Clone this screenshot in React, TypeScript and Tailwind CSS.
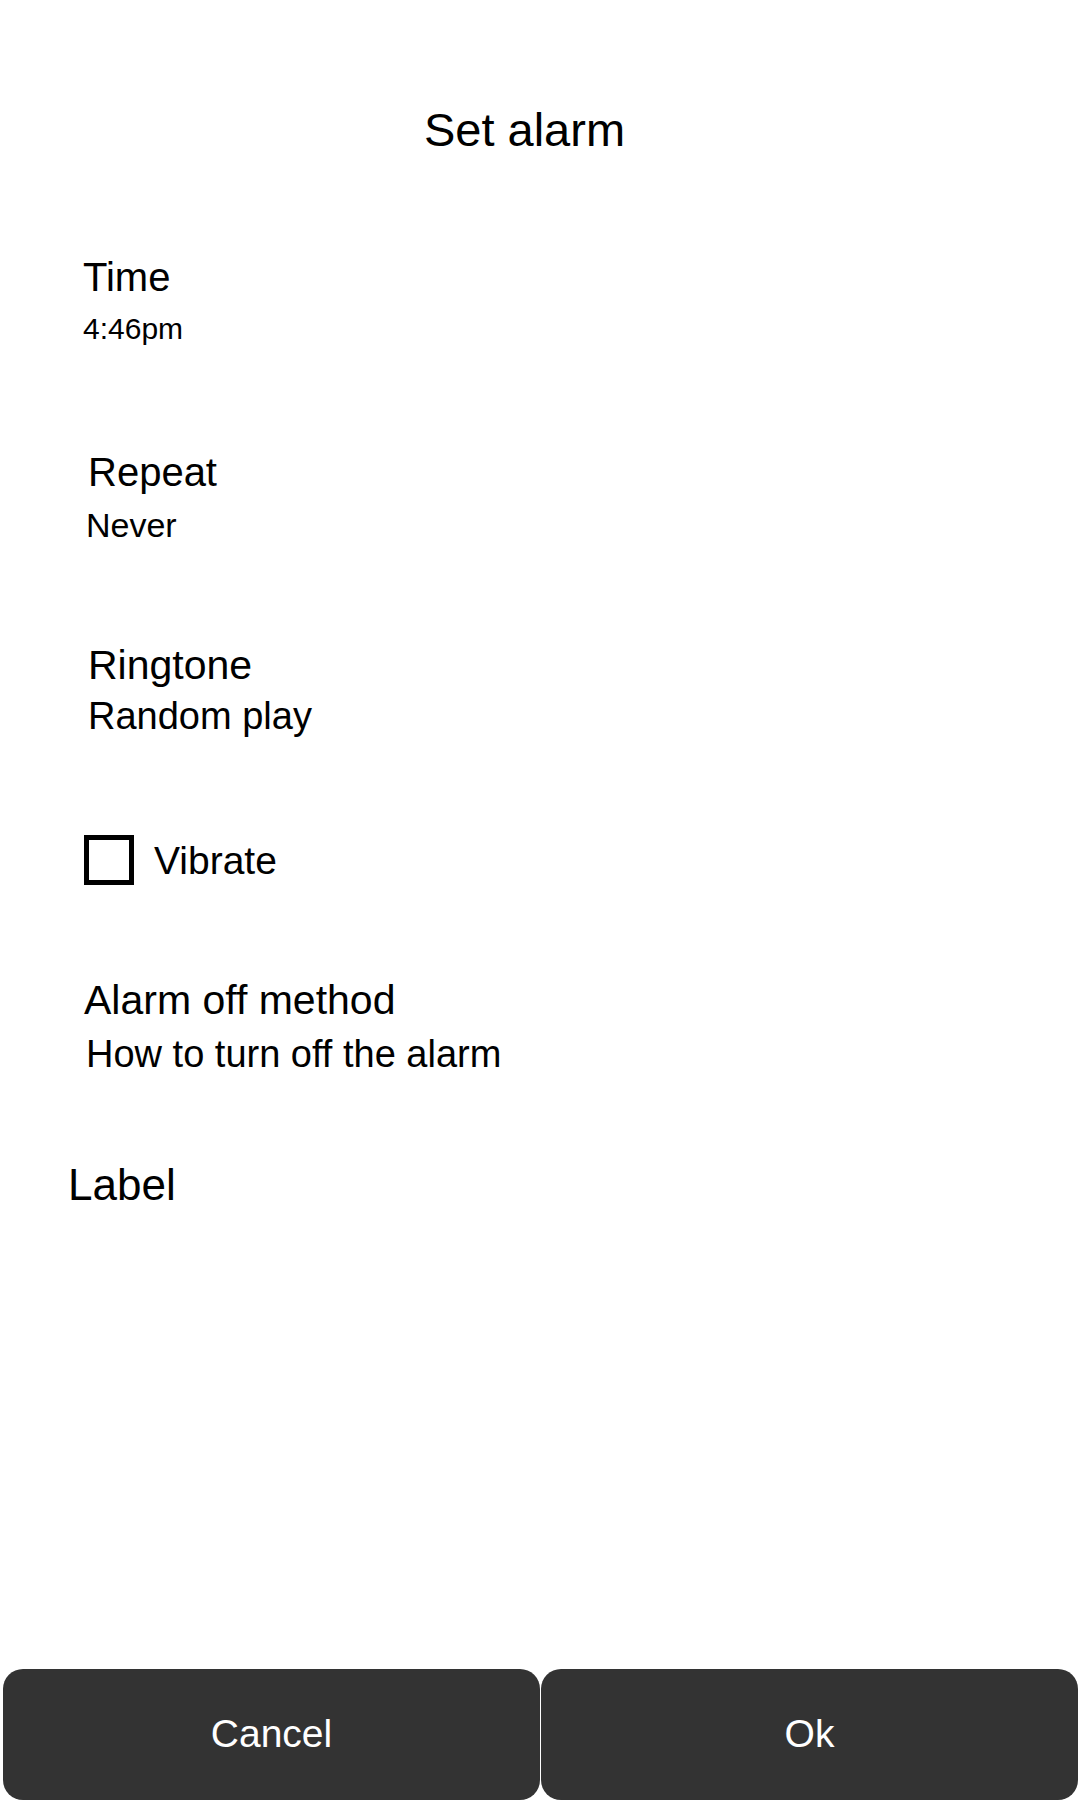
import React from "react";

const font = { fontFamily: '"Liberation Sans", Arial, sans-serif' };

function Setting({ title, value, className, titleSize, valueSize, gap }: { title: string; value: string; className: string; titleSize: string; valueSize: string; gap: string }) {
  return (
    <div className={`flex flex-col ${className}`}>
      <span className={`${titleSize} leading-none`}>{title}</span>
      <span className={`${valueSize} ${gap} leading-none`}>{value}</span>
    </div>
  );
}

export default function App() {
  return (
    <div className="flex h-[1800px] w-[1080px] flex-col bg-white text-black" style={font}>
      <div className="flex justify-center pr-[31px] pt-[106px]">
        <h1 className="text-[47px] font-normal leading-none">Set alarm</h1>
      </div>

      <Setting
        title="Time"
        value="4:46pm"
        className="mt-[104px] pl-[83px]"
        titleSize="text-[40px]"
        valueSize="text-[30px]"
        gap="mt-[17px]"
      />
      <Setting
        title="Repeat"
        value="Never"
        className="mt-[108px] pl-[88px]"
        titleSize="text-[40px]"
        valueSize="text-[34px] -ml-[2px]"
        gap="mt-[16px]"
      />
      <Setting
        title="Ringtone"
        value="Random play"
        className="mt-[103px] pl-[88px]"
        titleSize="text-[41px]"
        valueSize="text-[38px]"
        gap="mt-[11px]"
      />

      <div className="mt-[100px] flex items-center gap-[20px] pl-[84px]">
        <div className="h-[50px] w-[50px] border-[5px] border-black" />
        <span className="text-[39px] leading-none">Vibrate</span>
      </div>

      <Setting
        title="Alarm off method"
        value="How to turn off the alarm"
        className="mt-[95px] pl-[84px]"
        titleSize="text-[41px]"
        valueSize="text-[38px] ml-[2px]"
        gap="mt-[14px]"
      />

      <div className="mt-[90px] pl-[68px]">
        <span className="text-[44px] leading-none">Label</span>
      </div>

      <div className="mt-auto flex h-[131px] gap-px pl-[3px] pr-[2px]">
        <button className="flex flex-1 items-center justify-center rounded-[20px] bg-[#333333] text-[39px] text-white">
          Cancel
        </button>
        <button className="flex flex-1 items-center justify-center rounded-[20px] bg-[#333333] text-[39px] text-white">
          Ok
        </button>
      </div>
    </div>
  );
}
